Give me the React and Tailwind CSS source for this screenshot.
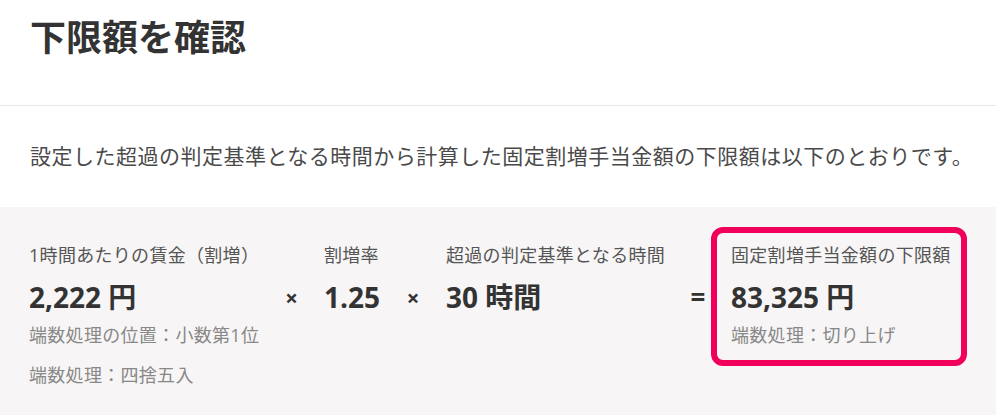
import React from 'react';

const font = { fontFamily: '"Open Sans", "Noto Sans CJK JP", sans-serif' };

const Operator = ({ children, className = '' }) => (
  <div className={`mt-[52px] h-[36px] flex items-center justify-center text-[#333] ${className}`}>
    {children}
  </div>
);

const Term = ({ label, value, unit, notes = [], className = '' }) => (
  <div className={`pt-[16px] ${className}`}>
    <p className="text-[18px] leading-[24px] text-[#555] tracking-[0.3px] whitespace-nowrap">{label}</p>
    <p className="mt-[12px] text-[28px] leading-[36px] font-bold text-[#333] whitespace-nowrap">
      {value} {unit}
    </p>
    {notes.map((note, i) => (
      <p
        key={note}
        className={`${i === 0 ? 'mt-[8px]' : 'mt-[16px]'} text-[18px] leading-[24px] text-[#888] tracking-[0.3px] whitespace-nowrap`}
      >
        {note}
      </p>
    ))}
  </div>
);

export default function App() {
  return (
    <div className="w-[996px] min-h-[415px] bg-white" style={font}>
      <header className="h-[106px] border-b border-[#e8e8e8] pl-[30px] pt-[12px]">
        <h1 className="text-[36px] leading-[52px] font-bold text-[#333]">下限額を確認</h1>
      </header>

      <section className="pl-[30px] pt-[35px] pb-[36px]">
        <p className="text-[21px] leading-[30px] text-[#4a4a4a] tracking-[0.5px] whitespace-nowrap">
          設定した超過の判定基準となる時間から計算した固定割増手当金額の下限額は以下のとおりです。
        </p>
      </section>

      <section className="bg-[#f7f5f5] pl-[29px] pt-[20px] pb-[30px] flex items-start">
        <Term
          className="w-[250px]"
          label="1時間あたりの賃金（割増）"
          value="2,222"
          unit="円"
          notes={['端数処理の位置：小数第1位', '端数処理：四捨五入']}
        />
        <Operator className="w-[25px] text-[22px] font-bold">×</Operator>
        <Term className="ml-[20px] w-[76px]" label="割増率" value="1.25" />
        <Operator className="w-[26px] text-[22px] font-bold">×</Operator>
        <Term className="ml-[20px] w-[239px]" label="超過の判定基準となる時間" value="30" unit="時間" />
        <Operator className="w-[26px] text-[26px] font-bold">=</Operator>
        <div className="w-[256px] border-[6px] border-[#f0005a] rounded-[12px] pl-[14px] pt-[10px] pb-[13px]">
          <p className="text-[18px] leading-[24px] text-[#555] tracking-[0.3px] whitespace-nowrap">固定割増手当金額の下限額</p>
          <p className="mt-[12px] text-[28px] leading-[36px] font-bold text-[#333] whitespace-nowrap">83,325 円</p>
          <p className="mt-[8px] text-[18px] leading-[24px] text-[#888] tracking-[0.3px] whitespace-nowrap">端数処理：切り上げ</p>
        </div>
      </section>
    </div>
  );
}
